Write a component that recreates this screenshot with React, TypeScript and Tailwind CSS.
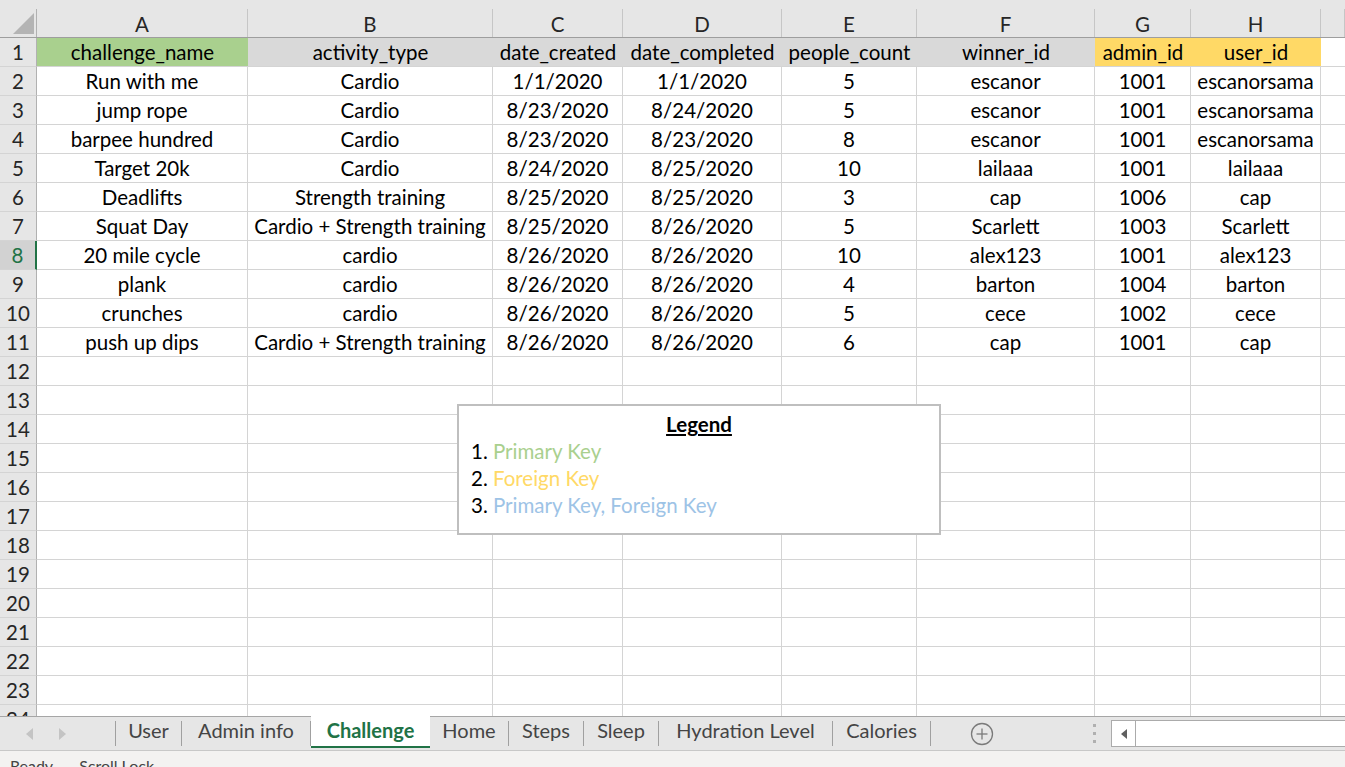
import React from 'react';

const colLetters = ['A', 'B', 'C', 'D', 'E', 'F', 'G', 'H', ''];

const headerRow = [
	{ text: 'challenge_name', bg: 'bg-[#a9d08e]' },
	{ text: 'activity_type', bg: 'bg-[#d9d9d9]' },
	{ text: 'date_created', bg: 'bg-[#d9d9d9]' },
	{ text: 'date_completed', bg: 'bg-[#d9d9d9]' },
	{ text: 'people_count', bg: 'bg-[#d9d9d9]' },
	{ text: 'winner_id', bg: 'bg-[#d9d9d9]' },
	{ text: 'admin_id', bg: 'bg-[#ffd966]' },
	{ text: 'user_id', bg: 'bg-[#ffd966]' },
];

const data = [
	['Run with me', 'Cardio', '1/1/2020', '1/1/2020', '5', 'escanor', '1001', 'escanorsama'],
	['jump rope', 'Cardio', '8/23/2020', '8/24/2020', '5', 'escanor', '1001', 'escanorsama'],
	['barpee hundred', 'Cardio', '8/23/2020', '8/23/2020', '8', 'escanor', '1001', 'escanorsama'],
	['Target 20k', 'Cardio', '8/24/2020', '8/25/2020', '10', 'lailaaa', '1001', 'lailaaa'],
	['Deadlifts', 'Strength training', '8/25/2020', '8/25/2020', '3', 'cap', '1006', 'cap'],
	['Squat Day', 'Cardio + Strength training', '8/25/2020', '8/26/2020', '5', 'Scarlett', '1003', 'Scarlett'],
	['20 mile cycle', 'cardio', '8/26/2020', '8/26/2020', '10', 'alex123', '1001', 'alex123'],
	['plank', 'cardio', '8/26/2020', '8/26/2020', '4', 'barton', '1004', 'barton'],
	['crunches', 'cardio', '8/26/2020', '8/26/2020', '5', 'cece', '1002', 'cece'],
	['push up dips', 'Cardio + Strength training', '8/26/2020', '8/26/2020', '6', 'cap', '1001', 'cap'],
];

const tabs = [
	{ name: 'User', w: 'w-[66px]' },
	{ name: 'Admin info', w: 'w-[129px]' },
	{ name: 'Challenge', w: 'w-[119px]', active: true },
	{ name: 'Home', w: 'w-[79px]' },
	{ name: 'Steps', w: 'w-[75px]' },
	{ name: 'Sleep', w: 'w-[75px]' },
	{ name: 'Hydration Level', w: 'w-[174px]' },
	{ name: 'Calories', w: 'w-[98px]' },
];

const gridCols = 'grid grid-cols-[37px_211px_245px_130px_159px_135px_178px_96px_130px_1fr]';

export default function App() {
	const emptyRows = Array.from({ length: 13 }, (_, i) => i + 12);

	return (
		<div className="w-[1345px] h-[767px] overflow-hidden bg-white flex flex-col font-['Lato','Noto_Sans',sans-serif] text-[20.5px] text-black">
			{/* column headers */}
			<div className="h-[38px] bg-[#e6e6e6] pt-[9px] border-b border-[#9e9e9e] shrink-0">
				<div className={`${gridCols} h-[28px]`}>
					<div className="relative border-r border-[#b1b1b1]">
						<svg className="absolute left-[13px] top-[4px]" width="21" height="21" viewBox="0 0 21 21">
							<polygon points="21,0 21,21 0,21" fill="#b4b4b4" />
						</svg>
					</div>
					{colLetters.map((c, i) => (
						<div key={i} className="flex items-center justify-center border-r border-[#c6c6c6] text-[#262626] leading-none pt-[2px]">
							{c}
						</div>
					))}
				</div>
			</div>

			{/* sheet body */}
			<div className="relative h-[678px] shrink-0 overflow-hidden">
				<div className={gridCols}>
					<RowHeader n={1} />
					{headerRow.map((h, i) => (
						<div key={i} className={`h-[29px] flex items-center justify-center border-b border-[#d4d4d4] ${h.bg}`}>
							{h.text}
						</div>
					))}
					<div className="h-[29px] border-b border-[#d4d4d4]" />

					{data.map((row, r) => (
						<React.Fragment key={r}>
							<RowHeader n={r + 2} selected={r + 2 === 8} />
							{row.map((v, c) => (
								<Cell key={c}>{v}</Cell>
							))}
							<Cell last />
						</React.Fragment>
					))}

					{emptyRows.map((n) => (
						<React.Fragment key={n}>
							<RowHeader n={n} />
							{Array.from({ length: 8 }, (_, c) => (
								<Cell key={c} />
							))}
							<Cell last />
						</React.Fragment>
					))}
				</div>

				{/* legend text box */}
				<div className="absolute left-[457px] top-[366px] w-[484px] h-[131px] bg-white border-2 border-[#bfbfbf] pl-[12px] pt-[5px]">
					<div className="text-center font-bold underline leading-[27px] pr-[12px]">Legend</div>
					<div className="leading-[27px]">
						1. <span className="text-[#a9d08e]">Primary Key</span>
					</div>
					<div className="leading-[27px]">
						2. <span className="text-[#ffd966]">Foreign Key</span>
					</div>
					<div className="leading-[27px]">
						3. <span className="text-[#9dc3e6]">Primary Key, Foreign Key</span>
					</div>
				</div>
			</div>

			{/* sheet tabs */}
			<div className="h-[35px] shrink-0 bg-[#e6e6e6] border-t border-[#a6a6a6] border-b border-b-[#c8c8c8] flex items-stretch text-[#444444] text-[20px]">
				<div className="w-[116px] flex items-center pl-[26px] gap-[24px] border-r border-[#a0a0a0] my-[4px]">
					<svg width="8" height="12" viewBox="0 0 8 12">
						<polygon points="7,0 7,12 0,6" fill="#c4c4c4" />
					</svg>
					<svg width="8" height="12" viewBox="0 0 8 12">
						<polygon points="1,0 1,12 8,6" fill="#c4c4c4" />
					</svg>
				</div>
				{tabs.map((t) =>
					t.active ? (
						<div
							key={t.name}
							className={`${t.w} -mt-[1px] mb-[2px] pb-[2px] bg-white border-b-2 border-[#217346] flex items-center justify-center font-bold text-[#217346]`}
						>
							{t.name}
						</div>
					) : (
						<div key={t.name} className={`${t.w} my-[4px] pb-[8px] flex items-center justify-center border-r border-[#a0a0a0]`}>
							{t.name}
						</div>
					),
				)}
				<div className="w-[100px] flex items-center justify-center pl-[2px]">
					<svg width="24" height="24" viewBox="0 0 24 24" fill="none" stroke="#7a7a7a" strokeWidth="1.3">
						<circle cx="12" cy="12" r="10.5" />
						<line x1="12" y1="6.5" x2="12" y2="17.5" />
						<line x1="6.5" y1="12" x2="17.5" y2="12" />
					</svg>
				</div>
				<div className="flex-1 flex items-center justify-end pr-[15px]">
					<div className="flex flex-col gap-[5px]">
						<div className="w-[3px] h-[3px] bg-[#b0b0b0]" />
						<div className="w-[3px] h-[3px] bg-[#b0b0b0]" />
						<div className="w-[3px] h-[3px] bg-[#b0b0b0]" />
					</div>
				</div>
				<div className="w-[234px] my-[3px] bg-white border border-[#ababab] border-r-0 flex">
					<div className="w-[24px] border-r border-[#ababab] flex items-center justify-center">
						<svg width="6" height="10" viewBox="0 0 6 10">
							<polygon points="6,0 6,10 0,5" fill="#606060" />
						</svg>
					</div>
				</div>
			</div>

			{/* status bar */}
			<div className="flex-1 bg-[#f3f2f1] overflow-hidden flex gap-[26px] pl-[10px] text-[16px] text-[#444444] leading-none pt-[7px]">
				<span>Ready</span>
				<span>Scroll Lock</span>
			</div>
		</div>
	);
}

function RowHeader({ n, selected }: { n: number; selected?: boolean }) {
	return (
		<div
			className={`h-[29px] flex items-center justify-center border-b border-[#d4d4d4] ${
				selected
					? 'bg-[#d2d2d2] text-[#217346] border-r-2 border-r-[#217346]'
					: 'bg-[#e6e6e6] text-[#262626] border-r border-r-[#b1b1b1]'
			}`}
		>
			{n}
		</div>
	);
}

function Cell({ children, last }: { children?: React.ReactNode; last?: boolean }) {
	return (
		<div
			className={`h-[29px] flex items-center justify-center whitespace-nowrap border-b border-[#d4d4d4] ${
				last ? '' : 'border-r'
			}`}
		>
			{children}
		</div>
	);
}
